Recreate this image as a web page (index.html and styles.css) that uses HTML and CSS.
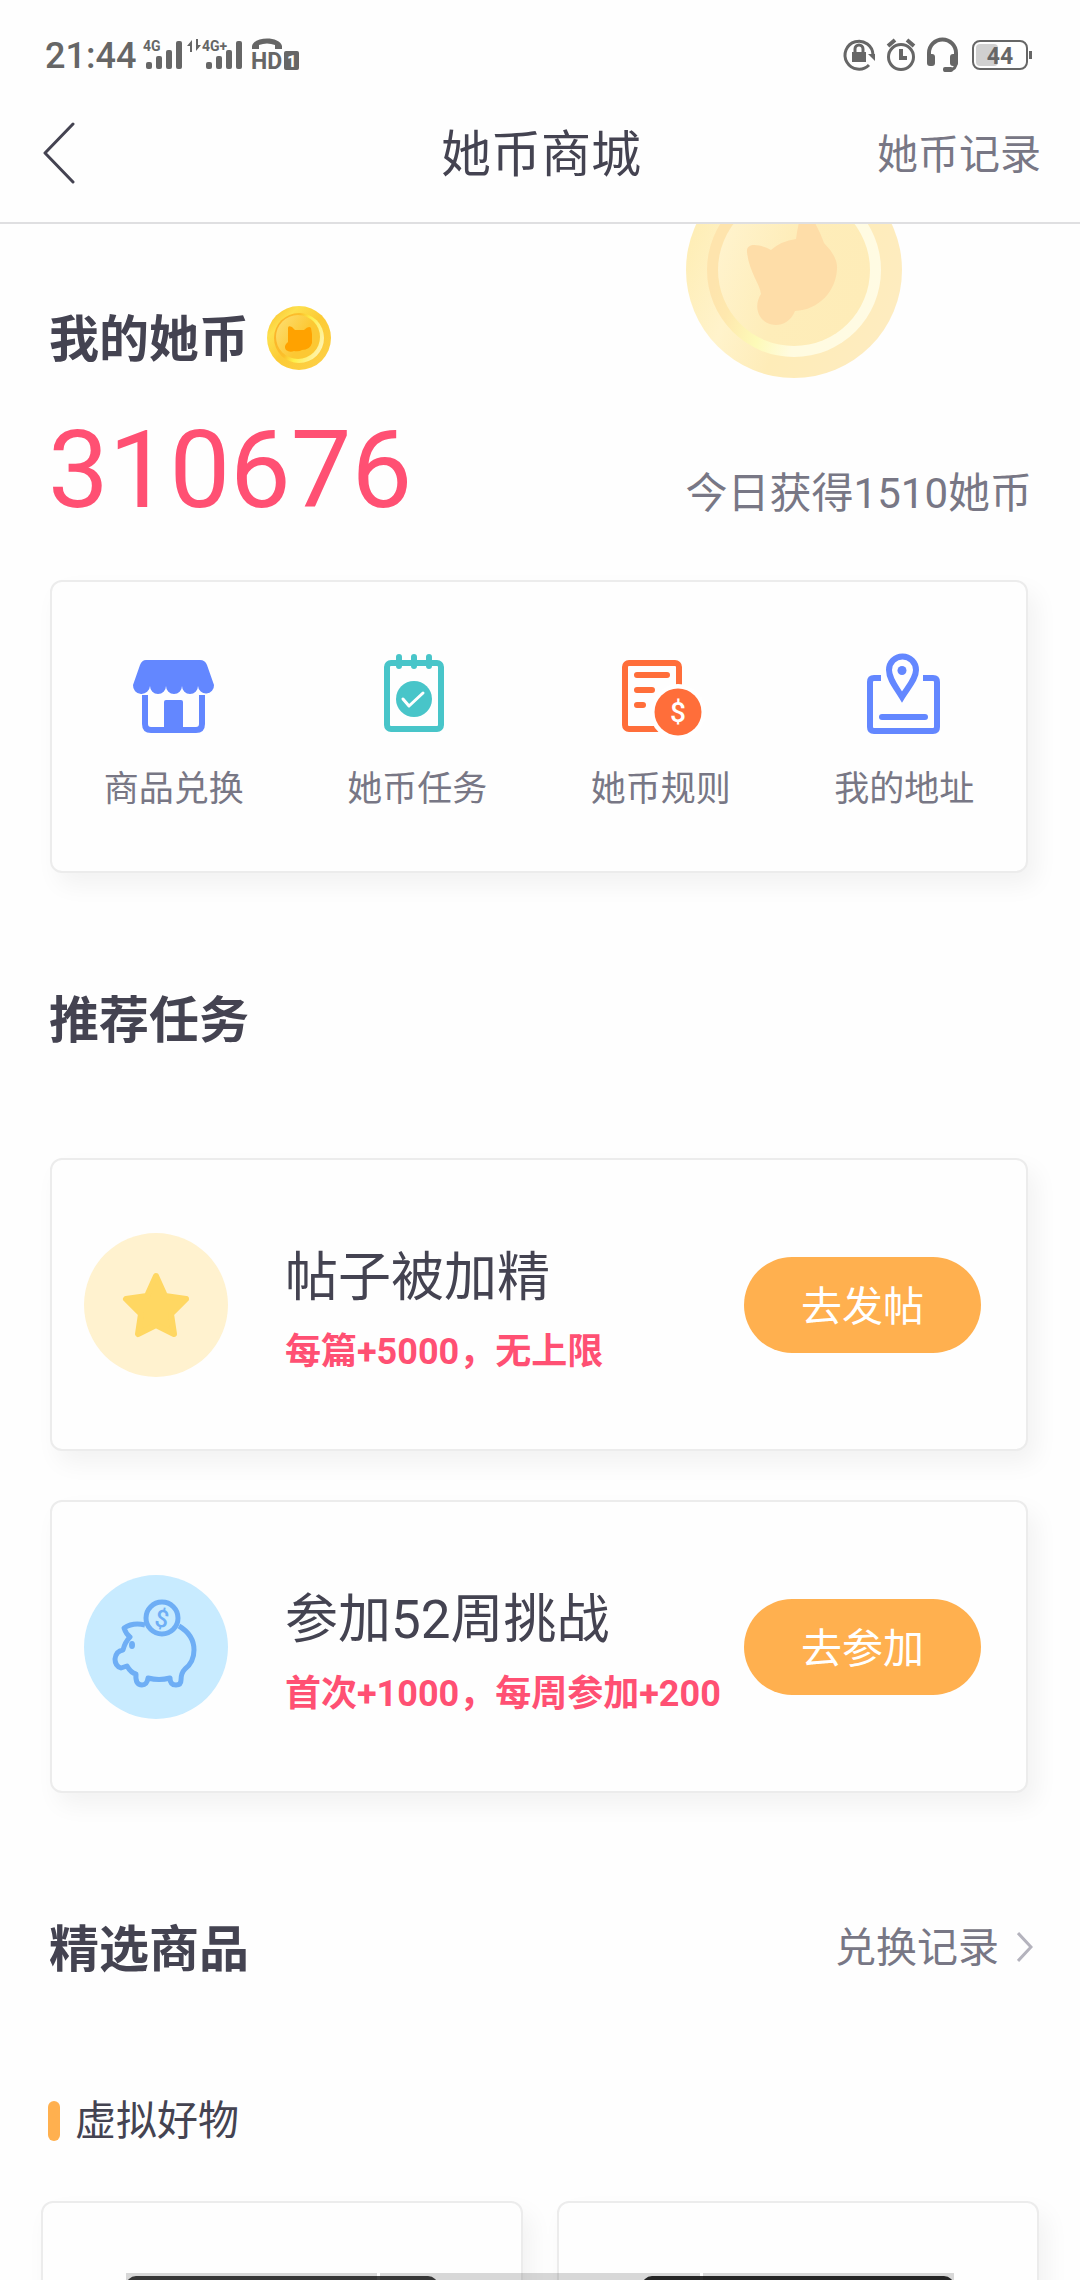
FILE: index.html
```html
<!DOCTYPE html>
<html lang="zh-CN">
<head>
<meta charset="utf-8">
<meta name="viewport" content="width=device-width, initial-scale=1">
<title>她币商城</title>
<link rel="stylesheet" href="styles.css">
</head>
<body>
<div class="app">
  <div class="status">
    <div class="status-group">
      <span class="clock">21:44</span>
      <svg class="signals" viewBox="140 34 162 42" width="162" height="42" aria-hidden="true">
        <g fill="#666">
          <text class="net" x="143" y="51">4G</text>
          <rect x="146" y="62" width="6" height="7" rx="2"/><rect x="156" y="56" width="6" height="13" rx="2"/><rect x="166" y="50" width="6" height="19" rx="2"/><rect x="176" y="41" width="6" height="28" rx="2"/>
          <path d="M187 46l5-6v12h-2v-6zM201 45l-5 6V39h2v6z"/>
          <text class="net" x="202" y="51">4G+</text>
          <rect x="206" y="62" width="6" height="7" rx="2"/><rect x="216" y="56" width="6" height="13" rx="2"/><rect x="226" y="50" width="6" height="19" rx="2"/><rect x="236" y="41" width="6" height="28" rx="2"/>
          <path d="M252 49v-3c2-10 28-10 30 0v3h-7v-4q-8-3-16 0v4z"/>
          <text class="hd" x="251" y="69">HD</text>
          <rect x="284" y="51" width="15" height="19" rx="2"/>
          <text class="sim" x="292" y="67" text-anchor="middle">1</text>
        </g>
      </svg>
    </div>
    <svg viewBox="840 34 194 42" width="194" height="42" aria-hidden="true">
      <g fill="none" stroke="#666" stroke-width="3">
        <path d="M873 55a14 14 0 1 0-4 10"/>
        <path d="M855 53v-4a4 4 0 0 1 8 0v4"/>
        <circle cx="901" cy="57" r="12.500"/>
        <path d="M888 46l7-6M914 46l-7-6" stroke-width="4"/>
        <path d="M901 49v9h6" stroke-width="4"/>
        <path d="M929 58v-5a13.500 13.500 0 0 1 27 0v5" stroke-width="4"/>
        <path d="M956 63q0 6-6 7h-6" stroke-width="3"/>
        <rect x="973" y="41" width="54" height="28" rx="7" stroke-width="2"/>
      </g>
      <g fill="#666">
        <rect x="852" y="52" width="14" height="10"/>
        <path d="M868 54h7v7z"/>
        <rect x="927" y="54" width="8" height="12" rx="3"/><rect x="950" y="54" width="8" height="12" rx="3"/>
        <rect x="943" y="67" width="10" height="5" rx="2"/>
        <rect x="1029" y="51" width="3" height="8"/>
        <rect x="976" y="44" width="22" height="22" rx="4" fill="#d0d0d0"/>
        <text class="battery" x="1000" y="64" text-anchor="middle">44</text>
      </g>
    </svg>
  </div>

  <header class="header">
    <button class="back" type="button" aria-label="返回">
      <svg viewBox="0 0 34 62" width="34" height="62"><path d="M32 2L4 31l28 29" fill="none" stroke="#444351" stroke-width="3" stroke-linecap="round" stroke-linejoin="round"/></svg>
    </button>
    <h1 class="title">她币商城</h1>
    <a class="header-link" href="#records">她币记录</a>
  </header>

  <main class="content">
    <svg class="big-coin" viewBox="0 0 216 216" width="216" height="216" aria-hidden="true">
      <defs>
        <linearGradient id="rim" x1="0" y1="0.300" x2="1" y2="0.700"><stop offset="0" stop-color="#feedb4"/><stop offset="0.300" stop-color="#fff3cb"/><stop offset="0.550" stop-color="#feecb8"/><stop offset="1" stop-color="#feecc0"/></linearGradient>
        <linearGradient id="ring" x1="0" y1="0.400" x2="1" y2="0.700"><stop offset="0.080" stop-color="#fee4ad"/><stop offset="0.200" stop-color="#fee8ae"/><stop offset="0.400" stop-color="#fdfab8"/><stop offset="0.600" stop-color="#fffbe0"/><stop offset="1" stop-color="#fffbe4"/></linearGradient>
        <linearGradient id="face" x1="0" y1="0.350" x2="1" y2="0.650"><stop offset="0" stop-color="#fff3cd"/><stop offset="0.450" stop-color="#feedb9"/><stop offset="1" stop-color="#feecb8"/></linearGradient>
      </defs>
      <circle cx="108" cy="108" r="108" fill="url(#rim)"/>
      <circle cx="108" cy="108" r="87" fill="url(#ring)"/>
      <circle cx="108" cy="108" r="76" fill="url(#face)"/>
      <path d="M61 90C60 80 74 82 85 88q10-9 25-11 2-14 4-20 7-9 15 4 6 11 9 20 14 14 13 26c-1 22-18 41-42 42-4 10-12 14-19 14-16 0-24-17-15-31-1-10-12-22-14-42z" fill="#fedda8"/>
    </svg>

    <section class="balance">
      <div class="balance-head">
        <h2 class="heading">我的她币</h2>
        <svg viewBox="0 0 64 64" width="64" height="64" aria-hidden="true">
          <defs>
            <linearGradient id="coin-rim" x1="0" y1="0" x2="1" y2="1"><stop offset="0" stop-color="#fbc22d"/><stop offset="0.120" stop-color="#fccb38"/><stop offset="0.250" stop-color="#fde04e"/><stop offset="0.500" stop-color="#fccb35"/><stop offset="1" stop-color="#fdd04a"/></linearGradient>
            <linearGradient id="coin-ring" x1="0" y1="0.200" x2="1" y2="0.600"><stop offset="0" stop-color="#fbb22a"/><stop offset="0.400" stop-color="#fcc02b"/><stop offset="0.600" stop-color="#fdf04a"/><stop offset="1" stop-color="#fff3b0"/></linearGradient>
            <linearGradient id="coin-face" x1="0" y1="0.200" x2="1" y2="0.800"><stop offset="0" stop-color="#fddc6c"/><stop offset="0.600" stop-color="#fcc833"/></linearGradient>
          </defs>
          <circle cx="32" cy="32" r="32" fill="url(#coin-rim)"/>
          <circle cx="32" cy="32" r="25" fill="url(#coin-ring)"/>
          <circle cx="31" cy="31" r="22" fill="url(#coin-face)"/>
          <path d="M21 22q0-3 4-1l3 3h9q5-5 7-2l1 6v9q-2 7-10 7-3 2-8 1-4 2-8-1-3-4 2-8z" fill="#ffa200"/>
        </svg>
      </div>
      <div class="balance-row">
        <strong class="amount">310676</strong>
        <span class="today">今日获得1510她币</span>
      </div>
    </section>

    <nav class="card shortcuts">
      <a class="shortcut" href="#exchange">
        <svg viewBox="0 0 90 90" width="90" height="90" aria-hidden="true"><g fill="#6387ff"><path d="M17 11h54q5 0 7 5l7 20a8 8 0 0 1-16 1 8 8 0 0 1-16 0 8 8 0 0 1-16 0 8 8 0 0 1-16 0 8 8 0 0 1-17-1l7-20q2-5 6-5z"/><path d="M35 82V53q0-2 2-2h15q2 0 2 2v29z"/></g><path d="M16 46v29q0 6 6 6h45q6 0 6-6V46" fill="none" stroke="#6387ff" stroke-width="6"/></svg>
        <span>商品兑换</span>
      </a>
      <a class="shortcut" href="#tasks">
        <svg viewBox="0 0 90 90" width="90" height="90" aria-hidden="true"><g fill="none" stroke="#48c5c9" stroke-width="6" stroke-linecap="round"><rect x="15" y="14" width="54" height="66" rx="4"/><path d="M27 8v9M42 8v9M57 8v9"/></g><circle cx="42" cy="50" r="18" fill="#48c5c9"/><path d="M31 50l6 7 14-13" fill="none" stroke="#fff" stroke-width="3" stroke-linecap="round" stroke-linejoin="round"/></svg>
        <span>她币任务</span>
      </a>
      <a class="shortcut" href="#rules">
        <svg viewBox="0 0 90 90" width="90" height="90" aria-hidden="true"><g fill="none" stroke="#ff6e3a" stroke-width="6"><rect x="9" y="14" width="54" height="66" rx="4"/><path d="M21 26h30M21 41h15M21 56h6" stroke-linecap="round"/></g><circle cx="62" cy="63" r="28" fill="#fff"/><circle cx="62" cy="63" r="23.500" fill="#ff6e3a"/><text class="dollar" x="62" y="73" text-anchor="middle" fill="#fff">$</text></svg>
        <span>她币规则</span>
      </a>
      <a class="shortcut" href="#address">
        <svg viewBox="0 0 90 90" width="90" height="90" aria-hidden="true"><g fill="none" stroke="#6387ff" stroke-width="6"><path d="M22 29h-7q-4 0-4 4v45q0 4 4 4h59q4 0 4-4V33q0-4-4-4h-10"/><path d="M23 68h43" stroke-linecap="round"/><path d="M43 48C37 38 30 30 30 21a13.500 13.500 0 0 1 27 0C57 30 49 38 43 48z"/></g><circle cx="43" cy="21.500" r="4.500" fill="#6387ff"/></svg>
        <span>我的地址</span>
      </a>
    </nav>

    <h2 class="heading tasks-heading">推荐任务</h2>
    <section class="tasks">
      <article class="card task">
        <svg viewBox="0 0 144 144" width="144" height="144" aria-hidden="true"><circle cx="72" cy="72" r="72" fill="#fff2cf"/><path d="M72 43l9 20 21 3-15 15 3 20-18-9-18 9 3-20-15-15 21-3z" fill="#ffd762" stroke="#ffd762" stroke-width="6" stroke-linejoin="round"/></svg>
        <div class="task-text">
          <h3 class="task-title">帖子被加精</h3>
          <p class="task-reward">每篇+5000，无上限</p>
        </div>
        <button class="task-button" type="button">去发帖</button>
      </article>
      <article class="card task">
        <svg viewBox="0 0 144 144" width="144" height="144" aria-hidden="true"><circle cx="72" cy="72" r="72" fill="#c8ebff"/><g fill="none" stroke="#6eaef5" stroke-width="5" stroke-linejoin="round"><circle cx="78" cy="43" r="16"/><path d="M61 50q-12-3-21 3 2 6 6 9-5 5-7 13-7 1-8 9 0 7 6 9l6-2q4 7 9 8-1 11 6 11 5 0 6-7 11 3 22 0 0 7 6 7 5 0 5-5 0-7 4-11 9-7 9-19 0-15-15-24"/></g><ellipse cx="48" cy="70" rx="3" ry="4" fill="#6eaef5"/><text class="pig-dollar" x="78" y="52" text-anchor="middle" fill="#6eaef5" transform="rotate(12 78 43)">$</text></svg>
        <div class="task-text">
          <h3 class="task-title">参加52周挑战</h3>
          <p class="task-reward">首次+1000，每周参加+200</p>
        </div>
        <button class="task-button" type="button">去参加</button>
      </article>
    </section>

    <div class="goods-head">
      <h2 class="heading">精选商品</h2>
      <a class="more" href="#history">兑换记录
        <svg viewBox="0 0 16 32" width="16" height="32" aria-hidden="true"><path d="M1 1l13 14L1 29" fill="none" stroke="#b4b3bd" stroke-width="3"/></svg>
      </a>
    </div>
    <h3 class="category">虚拟好物</h3>
    <section class="goods">
      <article class="card product"><div class="photo"></div></article>
      <article class="card product"><div class="photo photo-dark"></div></article>
    </section>
  </main>
  <div class="gesture"><i></i><i></i><i></i></div>
</div>
</body>
</html>
```
FILE: styles.css
```css
* { box-sizing: border-box; }
body, h1, h2, h3, p { margin: 0; }
body {
  background: #fefefe;
  color: #444351;
  font-family: Roboto, "Noto Sans CJK SC", sans-serif;
  font-size: 41px;
}
a { color: inherit; text-decoration: none; }
button { font: inherit; border: 0; padding: 0; cursor: pointer; }
svg { display: block; flex: none; }

.app {
  display: flex;
  flex-direction: column;
  height: 100vh;
  overflow: hidden;
}

/* system status bar */
.status {
  display: flex;
  justify-content: space-between;
  align-items: center;
  height: 84px;
  padding: 26px 46px 0 45px;
  flex: none;
}
.status-group { display: flex; align-items: center; gap: 4px; }
.clock { color: #666; font-size: 36px; font-weight: 500; line-height: 42px; padding-top: 2px; }
.net { font-size: 14px; font-weight: 700; }
.hd { font-size: 23px; font-weight: 700; }
.sim { fill: #fff; font-size: 17px; font-weight: 700; }
.battery { font-size: 23px; font-weight: 700; }

/* title bar */
.header {
  display: grid;
  grid-template-columns: 1fr auto 1fr;
  align-items: center;
  height: 140px;
  padding: 0 39px 0 41px;
  border-bottom: 2px solid #dfdfe1;
  flex: none;
}
.back { background: none; justify-self: start; }
.title { font-size: 50px; font-weight: 400; line-height: 60px; padding-top: 4px; }
.header-link { justify-self: end; color: #787785; line-height: 50px; padding-top: 4px; }

.content {
  position: relative;
  flex: 1;
  min-height: 0;
  overflow: hidden auto;
  scrollbar-width: none;
  padding: 74px 52px 60px 50px;
}
.big-coin { position: absolute; top: -62px; right: 178px; }

.heading { font-size: 50px; font-weight: 700; line-height: 60px; padding-top: 4px; margin-left: -1px; }
.balance-head { display: flex; align-items: center; gap: 18px; height: 80px; }
.balance-row {
  display: flex;
  justify-content: space-between;
  align-items: flex-end;
  margin: 38px -4px 0 -2px;
}
.amount { color: #ff5073; font-size: 108px; font-weight: 400; line-height: 108px; }
.today { color: #787785; font-size: 42px; line-height: 60px; }

.card {
  background: #fefefe;
  border: 2px solid #ececec;
  border-radius: 12px;
  box-shadow: 8px 12px 24px rgba(0, 0, 0, 0.05);
}
.shortcuts {
  display: grid;
  grid-template-columns: repeat(4, 1fr);
  margin-top: 56px;
  padding: 67px 0 56px;
}
.shortcut {
  display: flex;
  flex-direction: column;
  align-items: center;
  gap: 26px;
  color: #787785;
  font-size: 35px;
  line-height: 50px;
}
.dollar { font-size: 28px; font-weight: 500; }

.tasks-heading { margin: 114px 0 107px -1px; }
.tasks { display: flex; flex-direction: column; gap: 49px; }
.task {
  display: flex;
  align-items: center;
  min-height: 293px;
  padding: 0 45px 0 32px;
}
.task-text { flex: 1; margin-left: 57px; padding-top: 8px; white-space: nowrap; }
.task-title { font-size: 53px; font-weight: 400; line-height: 74px; }
.task-reward { color: #ff5073; font-size: 36px; font-weight: 700; line-height: 50px; margin-top: 12px; }
.task-button {
  width: 237px;
  height: 96px;
  border-radius: 48px;
  padding-bottom: 4px;
  background: #ffb04f;
  color: #fff;
}
.pig-dollar { font-size: 24px; font-weight: 500; }

.goods-head {
  display: flex;
  justify-content: space-between;
  align-items: center;
  margin-top: 123px;
  margin-right: -5px;
}
.more { display: flex; align-items: center; gap: 18px; color: #787785; line-height: 60px; }
.category {
  display: flex;
  align-items: center;
  gap: 15px;
  margin: 116px 0 55px -2px;
  font-size: 41px;
  font-weight: 400;
  line-height: 50px;
}
.category::before {
  content: "";
  width: 12px;
  height: 40px;
  border-radius: 6px;
  background: #ffb04f;
}
.goods {
  display: grid;
  grid-template-columns: 1fr 1fr;
  gap: 34px;
  margin: 0 -11px 0 -9px;
}
.product { padding: 73px 83px; }
.photo { height: 312px; border-radius: 10px; background: #414141; }
.photo-dark { background: #2c2c2c; }

/* gesture hints over the bottom edge */
.gesture {
  position: fixed;
  bottom: 0;
  left: 126px;
  right: 126px;
  display: grid;
  grid-template-columns: 251fr 320fr 251fr;
  gap: 3px;
  height: 7px;
}
.gesture i { background: rgba(0, 0, 0, 0.15); }
```
